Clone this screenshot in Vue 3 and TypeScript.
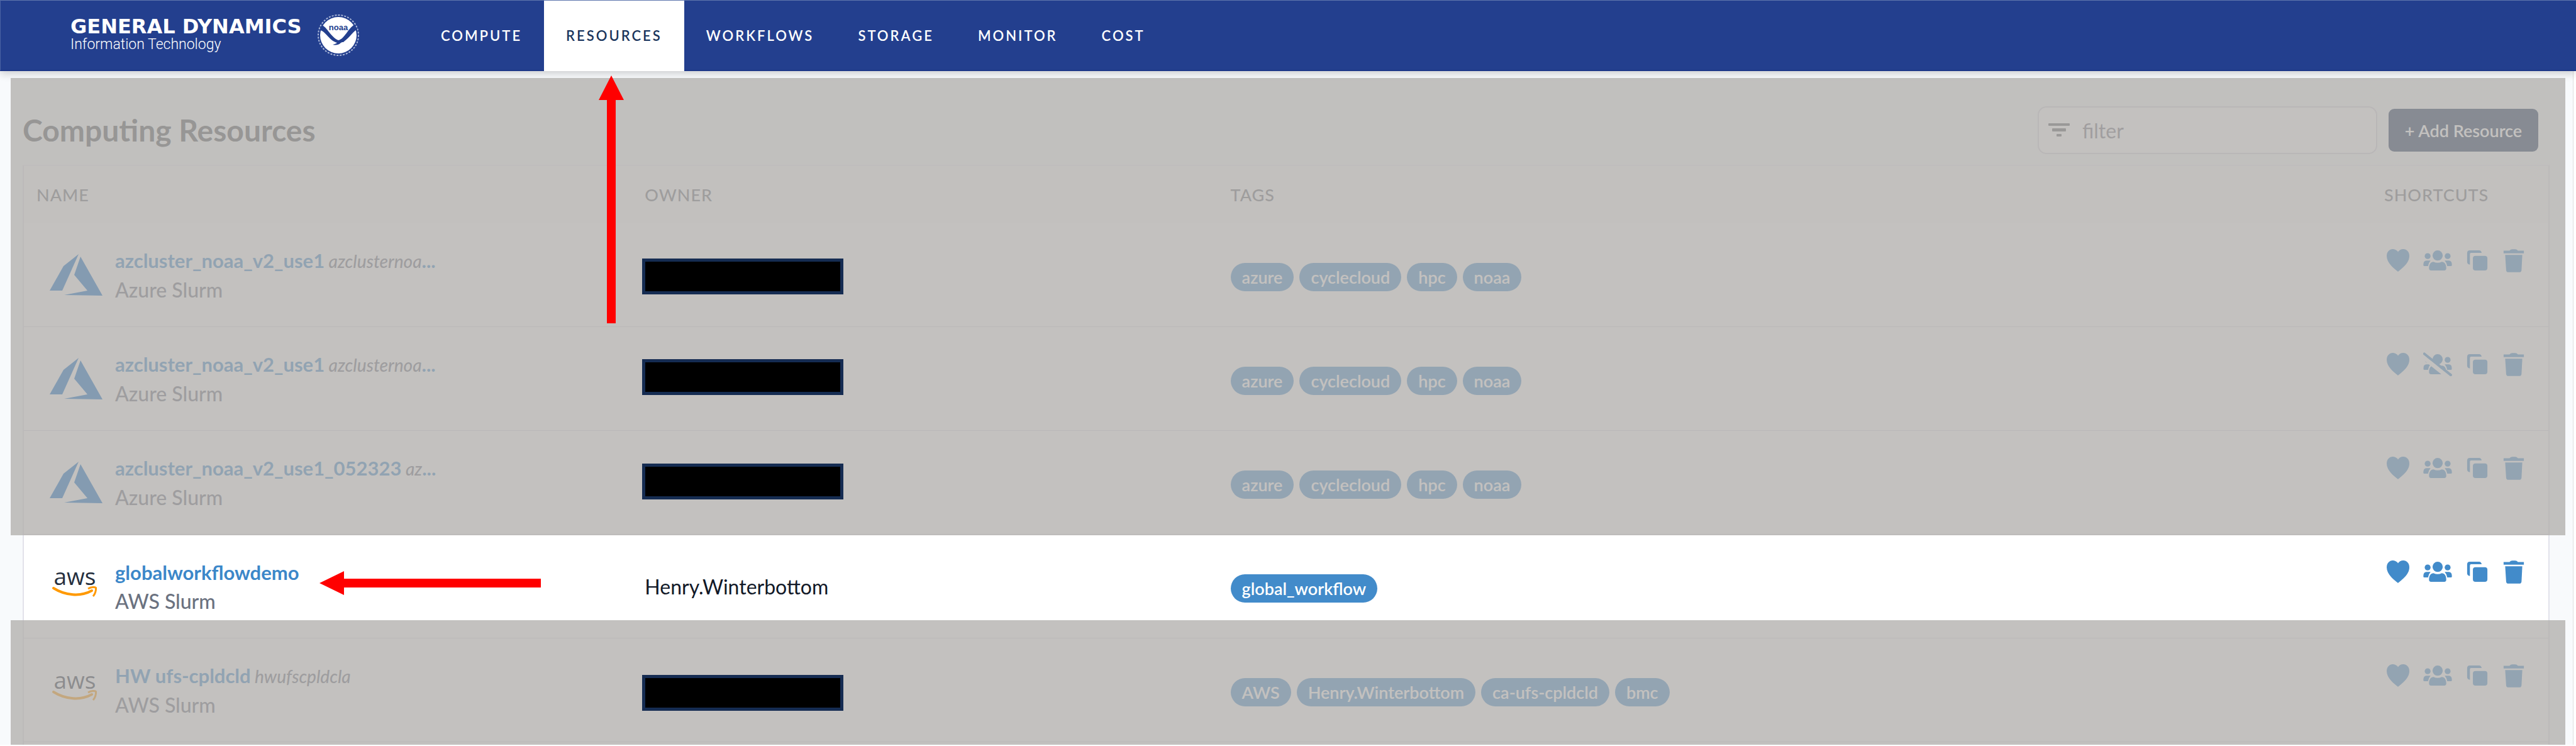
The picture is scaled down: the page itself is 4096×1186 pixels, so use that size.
<script setup lang="ts">
import { ref } from 'vue'

type Provider = 'azure' | 'aws'

interface Resource {
  name: string
  alias?: string
  truncated?: boolean
  provider: Provider
  type: string
  owner?: string
  tags: string[]
  shared: boolean
}

const navItems = ['Compute', 'Resources', 'Workflows', 'Storage', 'Monitor', 'Cost']
const activeItem = 'Resources'
const filter = ref('')

const azureTags = ['azure', 'cyclecloud', 'hpc', 'noaa']

const resources: Resource[] = [
  { name: 'azcluster_noaa_v2_use1', alias: 'azclusternoa', truncated: true, provider: 'azure', type: 'Azure Slurm', tags: azureTags, shared: true },
  { name: 'azcluster_noaa_v2_use1', alias: 'azclusternoa', truncated: true, provider: 'azure', type: 'Azure Slurm', tags: azureTags, shared: false },
  { name: 'azcluster_noaa_v2_use1_052323', alias: 'az', truncated: true, provider: 'azure', type: 'Azure Slurm', tags: azureTags, shared: true },
  { name: 'globalworkflowdemo', provider: 'aws', type: 'AWS Slurm', owner: 'Henry.Winterbottom', tags: ['global_workflow'], shared: true },
  { name: 'HW ufs-cpldcld', alias: 'hwufscpldcla', provider: 'aws', type: 'AWS Slurm', tags: ['AWS', 'Henry.Winterbottom', 'ca-ufs-cpldcld', 'bmc'], shared: true },
]

const redactions = [411, 571, 737, 1073]
</script>

<template>
  <div class="page">
    <header class="topbar">
      <div class="brand">
        <div class="brand-text">
          <span class="brand-name">GENERAL DYNAMICS</span>
          <span class="brand-sub">Information Technology</span>
        </div>
        <svg class="seal" viewBox="0 0 68 68" aria-hidden="true">
          <circle cx="34" cy="34" r="32" fill="none" stroke="#a9b6d8" stroke-width="2" stroke-dasharray="3 2" />
          <circle cx="34" cy="34" r="29" fill="#fff" />
          <path d="M8 18 C16 21 22 37 34 42 C44 40 50 22 60 17 L64 25 C56 28 50 42 38 46 C34 50 30 50 25 49 C29 48 31 47 32 46 C20 43 14 28 5 26 Z" fill="#233f8e" />
          <path d="M36 42 L46 41 L42 45 L36 45 Z" fill="#233f8e" />
          <text x="34" y="26" text-anchor="middle" class="seal-text">noaa</text>
        </svg>
      </div>
      <nav class="nav">
        <a v-for="item in navItems" :key="item" href="#" :class="{ active: item === activeItem }">{{ item.toUpperCase() }}</a>
      </nav>
    </header>

    <main class="content">
      <div class="toolbar">
        <h1>Computing Resources</h1>
        <label class="filter">
          <svg viewBox="0 0 34 22" aria-hidden="true">
            <rect x="0" y="0" width="34" height="4" rx="1" />
            <rect x="6" y="8" width="22" height="5" rx="1" />
            <rect x="13" y="17" width="8" height="4" rx="1" />
          </svg>
          <input v-model="filter" type="text" placeholder="filter" aria-label="filter" />
        </label>
        <button type="button" class="add">+ Add Resource</button>
      </div>

      <div class="card">
        <table>
          <colgroup>
            <col class="c-name" />
            <col class="c-owner" />
            <col />
            <col class="c-short" />
          </colgroup>
          <thead>
            <tr>
              <th>NAME</th>
              <th>OWNER</th>
              <th>TAGS</th>
              <th>SHORTCUTS</th>
            </tr>
          </thead>
          <tbody>
            <tr v-for="(r, i) in resources" :key="i">
              <td>
                <div class="resource">
                  <div class="logo">
                    <svg v-if="r.provider === 'azure'" class="azure" viewBox="0 0 84 66" aria-hidden="true">
                      <path d="M46 0 L22 19 L0 58 L20 58 Z" />
                      <path d="M49 4 L84 66 L23 65 L60 58 L39 33 Z" />
                    </svg>
                    <svg v-else class="aws" viewBox="0 -20 80 86" aria-hidden="true">
                      <text x="38" y="21" text-anchor="middle">aws</text>
                      <path d="M4 26 C23 38 47 40 65 30" fill="none" stroke="#f90" stroke-width="4" stroke-linecap="round" />
                      <path d="M59 27 C64 24 70 24 71.500 25.500 C72 30 70 36 67 39" fill="none" stroke="#f90" stroke-width="3" />
                    </svg>
                  </div>
                  <div class="labels">
                    <div>
                      <a href="#" class="name">{{ r.name }}</a>
                      <em v-if="r.alias">{{ ' ' + r.alias }}</em><span v-if="r.truncated" class="name">...</span>
                    </div>
                    <div class="kind">{{ r.type }}</div>
                  </div>
                </div>
              </td>
              <td>{{ r.owner }}</td>
              <td>
                <div class="tags">
                  <span v-for="t in r.tags" :key="t" class="tag">{{ t }}</span>
                </div>
              </td>
              <td class="top">
                <div class="shortcuts">
                  <button type="button" aria-label="Favorite">
                    <svg width="36" height="36" viewBox="0 0 36 36"><path d="M18 36 C13 31.500 0 23 0 11 C0 4 4.500 0 9.500 0 C13.500 0 16.500 2 18 4.500 C19.500 2 22.500 0 26.500 0 C31.500 0 36 4 36 11 C36 23 23 31.500 18 36 Z" /></svg>
                  </button>
                  <button type="button" aria-label="Sharing">
                    <svg width="46" height="38" viewBox="0 -10 146 122">
                      <mask id="slash-gap">
                        <rect x="0" y="-10" width="146" height="122" fill="#fff" />
                        <path d="M-9 8 L129 118" stroke="#000" stroke-width="22" />
                      </mask>
                      <g :mask="r.shared ? undefined : 'url(#slash-gap)'">
                        <circle cx="73" cy="26" r="26" />
                        <circle cx="22" cy="29" r="15" />
                        <circle cx="124" cy="29" r="15" />
                        <path d="M29 92 C29 70 38 58 52 58 Q73 68 94 58 C108 58 117 70 117 92 Q117 102 107 102 H39 Q29 102 29 92 Z" />
                        <path d="M0 74 Q0 52 16 52 H37 Q26 64 24 80 H6 Q0 80 0 74 Z" />
                        <path d="M146 74 Q146 52 130 52 H109 Q120 64 122 80 H140 Q146 80 146 74 Z" />
                      </g>
                      <path v-if="!r.shared" d="M5 -2 L140 106" stroke="currentColor" stroke-width="13" stroke-linecap="round" />
                    </svg>
                  </button>
                  <button type="button" aria-label="Duplicate">
                    <svg width="36" height="36" viewBox="-6 -6 114 114">
                      <path d="M14 72 Q0 70 0 58 V14 Q0 0 14 0 H60 Q72 1 73 13 H20 Q14 13 14 19 Z" />
                      <rect x="29" y="28" width="73" height="74" rx="13" />
                    </svg>
                  </button>
                  <button type="button" aria-label="Delete">
                    <svg width="36" height="37" viewBox="-6 0 115 117">
                      <path d="M0 7 H30 Q36 0 44 0 H59 Q67 0 73 7 H103 V21 H0 Z" />
                      <path d="M8 29 H95 L91 107 Q90 117 80 117 H24 Q14 117 13 107 Z" />
                    </svg>
                  </button>
                </div>
              </td>
            </tr>
          </tbody>
        </table>
      </div>
    </main>

    <div class="shade shade-upper"></div>
    <div class="shade shade-lower"></div>
    <div v-for="y in redactions" :key="y" class="redaction" :style="{ top: y + 'px' }"></div>
    <svg class="arrow arrow-up" viewBox="0 0 40 394" aria-hidden="true">
      <path d="M20 0 L40 39 H27 V394 H13 V39 H0 Z" />
    </svg>
    <svg class="arrow arrow-left" viewBox="0 0 352 38" aria-hidden="true">
      <path d="M0 19 L39 0 V12 H352 V26 H39 V38 Z" />
    </svg>
  </div>
</template>

<style>
body {
  margin: 0;
  background: #fff;
}
</style>

<style scoped>
.page {
  position: relative;
  padding-bottom: 3px;
  font-family: Lato, "Liberation Sans", sans-serif;
  font-size: 32px;
  line-height: 45px;
  color: #111827;
}
.topbar {
  position: relative;
  z-index: 1;
  box-sizing: border-box;
  height: 113px;
  display: flex;
  background: #233f8e;
  border-top: 1px solid #5f76ad;
  border-left: 1px solid #4a62a3;
  border-bottom: 2px solid #1c3787;
  box-shadow: 0 4px 12px rgba(0, 0, 0, 0.18);
}
.brand {
  display: flex;
  align-items: center;
  gap: 26px;
  width: 554px;
  padding-left: 111px;
  color: #fff;
}
.brand-text {
  display: flex;
  flex-direction: column;
  width: 366px;
  white-space: nowrap;
}
.brand-name {
  font: bold 32px/30px "DejaVu Sans", sans-serif;
}
.brand-sub {
  font: 300 23px/28px Roboto, sans-serif;
}
.seal {
  width: 68px;
  height: 68px;
}
.seal-text {
  font: bold 13px "Liberation Sans", sans-serif;
  fill: #233f8e;
}
.nav {
  display: flex;
}
.nav a {
  display: flex;
  align-items: center;
  padding: 0 35px;
  color: #fff;
  font-size: 22px;
  font-weight: 600;
  letter-spacing: 3px;
  text-decoration: none;
}
.nav a.active {
  margin-bottom: -2px;
  padding-bottom: 2px;
  background: #fff;
  color: #1b365d;
}
.content {
  margin-right: 4px;
  padding: 56px 37px 0 36px;
  background: #f8fafc;
  border-right: 1px solid #dedede;
}
.toolbar {
  display: flex;
  align-items: center;
  gap: 18px;
  margin-bottom: 17px;
  padding-right: 18px;
}
h1 {
  flex: 1;
  margin: 0;
  color: #4f5458;
  font-size: 48px;
  line-height: 60px;
}
.filter {
  box-sizing: border-box;
  width: 540px;
  height: 76px;
  display: flex;
  align-items: center;
  gap: 20px;
  padding: 0 15px;
  background: #fff;
  border: 2px solid #d6d6e0;
  border-radius: 14px;
}
.filter svg {
  width: 34px;
  height: 22px;
  fill: #5b5f66;
}
.filter input {
  flex: 1;
  min-width: 0;
  padding: 0;
  border: 0;
  outline: 0;
  background: none;
  font: 32px/45px Lato, sans-serif;
}
.filter input::placeholder {
  color: #75757f;
  opacity: 1;
}
.add {
  width: 238px;
  height: 68px;
  padding: 0;
  border: 0;
  border-radius: 9px;
  background: #10284f;
  color: #fff;
  font: 600 27px/45px Lato, sans-serif;
}
.card {
  padding-bottom: 4px;
  background: #fff;
  border: 2px solid #e2e2ea;
  border-top-color: #f0f0f5;
  border-bottom: 0;
}
table {
  width: 100%;
  table-layout: fixed;
  border-collapse: collapse;
}
.c-name {
  width: 24.1%;
}
.c-owner {
  width: 23.2%;
}
.c-short {
  width: 281px;
}
th {
  height: 91px;
  padding: 0 0 0 20px;
  background: #f9fafb;
  color: #6b6f78;
  font-size: 27px;
  font-weight: 500;
  letter-spacing: 1px;
  text-align: left;
}
td {
  height: 164px;
  padding: 0 0 0 20px;
  border-bottom: 1px solid #dcdce4;
}
.resource {
  display: flex;
  align-items: center;
}
.logo {
  display: flex;
  justify-content: center;
  width: 125px;
}
.azure {
  width: 84px;
  height: 66px;
  fill: #0568c6;
}
.aws {
  width: 80px;
  height: 86px;
}
.aws text {
  font: 500 37px "Open Sans", sans-serif;
  fill: #252f3e;
}
.labels {
  white-space: nowrap;
}
.name {
  color: #3b87c9;
  font-size: 31px;
  font-weight: 700;
  text-decoration: none;
}
em {
  color: #6b7280;
  font-size: 28px;
  font-weight: 500;
}
.kind {
  color: #6b7280;
  font-weight: 500;
}
.tags {
  display: flex;
  gap: 9px;
  padding-top: 7px;
}
.tag {
  padding: 0 18px;
  border-radius: 23px;
  background: #428bca;
  color: #fff;
  font-size: 27px;
  font-weight: 600;
}
td.top {
  vertical-align: top;
}
.shortcuts {
  display: flex;
  align-items: center;
  gap: 22px;
  padding: 40px 0 0 4px;
}
.shortcuts button {
  display: flex;
  padding: 0;
  border: 0;
  background: none;
  color: #428bca;
}
.shortcuts svg {
  fill: currentColor;
}
.shade {
  position: absolute;
  z-index: 2;
  left: 17px;
  right: 17px;
  background: rgba(175, 172, 169, 0.75);
}
.shade-upper {
  top: 124px;
  height: 727px;
}
.shade-lower {
  top: 986px;
  bottom: 3px;
}
.redaction {
  position: absolute;
  z-index: 3;
  left: 1021px;
  box-sizing: border-box;
  width: 320px;
  height: 57px;
  background: #000;
  border: 5px solid #152c52;
}
.arrow {
  position: absolute;
  z-index: 4;
  fill: #f00;
}
.arrow-up {
  left: 952px;
  top: 120px;
  width: 40px;
  height: 394px;
}
.arrow-left {
  left: 508px;
  top: 908px;
  width: 352px;
  height: 38px;
}
</style>
